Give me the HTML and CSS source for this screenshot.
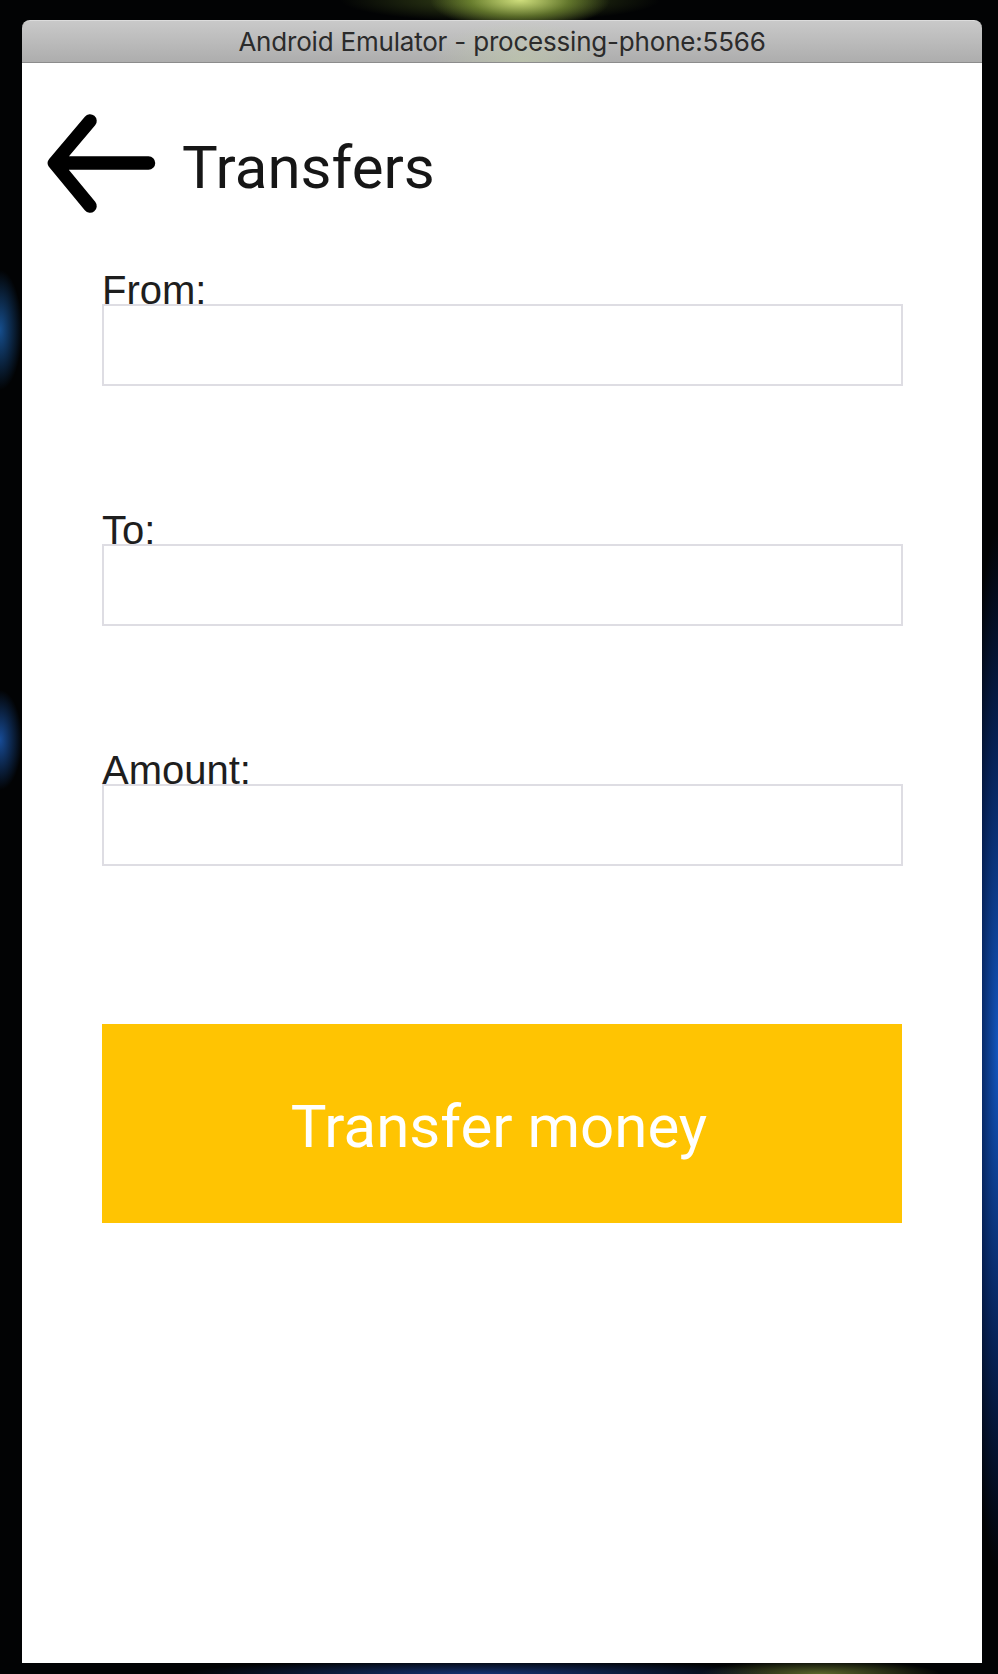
FILE: index.html
```html
<!DOCTYPE html>
<html lang="en">
<head>
<meta charset="utf-8">
<title>Transfers</title>
<link rel="stylesheet" href="styles.css">
</head>
<body>
<div class="window">
  <div class="titlebar">Android Emulator - processing-phone:5566</div>
  <div class="screen">
    <header class="appbar">
      <svg class="back" width="120" height="110" viewBox="0 0 120 110" aria-hidden="true">
        <path d="M48 12 L12.5 54 L48 97 M12.5 54 L106.5 54" fill="none" stroke="#000" stroke-width="13.5" stroke-linecap="round" stroke-linejoin="round"/>
      </svg>
      <h1 class="title">Transfers</h1>
    </header>
    <form class="form">
      <div class="field">
        <label class="label">From:</label>
        <div class="input"></div>
      </div>
      <div class="field">
        <label class="label">To:</label>
        <div class="input"></div>
      </div>
      <div class="field">
        <label class="label">Amount:</label>
        <div class="input"></div>
      </div>
      <div class="button">Transfer money</div>
    </form>
  </div>
</div>
</body>
</html>
```

FILE: styles.css
```css
html, body {
  margin: 0;
  padding: 0;
}

body {
  width: 998px;
  height: 1674px;
  overflow: hidden;
  background:
    radial-gradient(ellipse 90px 30px at 520px 0px, rgba(215, 230, 130, 0.95), rgba(160, 190, 70, 0.5) 55%, rgba(0,0,0,0) 100%),
    radial-gradient(ellipse 160px 22px at 500px 0px, rgba(120, 150, 50, 0.5), rgba(0,0,0,0) 100%),
    radial-gradient(ellipse 22px 60px at 0px 330px, rgba(30, 110, 200, 0.7), rgba(0,0,0,0) 100%),
    radial-gradient(ellipse 22px 50px at 0px 740px, rgba(30, 100, 200, 0.75), rgba(0,0,0,0) 100%),
    radial-gradient(ellipse 34px 520px at 998px 1050px, rgba(20, 90, 200, 0.95), rgba(10, 60, 160, 0.5) 60%, rgba(0,0,0,0) 100%),
    radial-gradient(ellipse 300px 14px at 480px 1674px, rgba(30, 70, 160, 0.7), rgba(0,0,0,0) 100%),
    radial-gradient(ellipse 120px 14px at 820px 1674px, rgba(150, 170, 70, 0.6), rgba(0,0,0,0) 100%),
    #020304;
  font-family: "Liberation Sans", Arial, sans-serif;
}

.window {
  width: 960px;
  margin: 20px 0 0 22px;
  display: flex;
  flex-direction: column;
}

.titlebar {
  height: 43px;
  box-sizing: border-box;
  padding-top: 2px;
  border-radius: 8px 8px 0 0;
  border-top: 1px solid #dcdcdc;
  border-bottom: 1px solid #8c8c8c;
  background:
    radial-gradient(ellipse 90px 40px at 500px 40px, rgba(200, 215, 170, 0.45), rgba(0,0,0,0) 100%),
    linear-gradient(#c9c9c9, #adadad);
  text-align: center;
  font-family: Inter, "Noto Sans", sans-serif;
  font-size: 26px;
  line-height: 38px;
  color: #2b2b2b;
  letter-spacing: -0.2px;
}

.screen {
  height: 1600px;
  background: #ffffff;
  display: flex;
  flex-direction: column;
}

.appbar {
  display: flex;
  align-items: flex-start;
  padding: 46px 0 0 20px;
  height: 110px;
  gap: 20px;
}

.back {
  display: block;
  flex: none;
}

.title {
  margin: 29px 0 0 0;
  font-family: Roboto, sans-serif;
  font-weight: 400;
  font-size: 60px;
  line-height: 60px;
  color: #161616;
}

.form {
  display: flex;
  flex-direction: column;
  margin: 57px 79px 0 80px;
  gap: 130px;
}

.field {
  display: flex;
  flex-direction: column;
}

.label {
  font-size: 40px;
  line-height: 28px;
  height: 28px;
  color: #1e1e1e;
  position: relative;
  z-index: 1;
}

.input {
  height: 82px;
  box-sizing: border-box;
  border: 2px solid #dedde3;
  background: #fff;
}

.button {
  margin-top: 28px;
  width: 800px;
  height: 199px;
  box-sizing: border-box;
  padding: 73px 6px 0 0;
  background: #ffc402;
  color: #ffffff;
  text-align: center;
  font-family: Roboto, sans-serif;
  font-size: 60px;
  line-height: 59px;
}
```
